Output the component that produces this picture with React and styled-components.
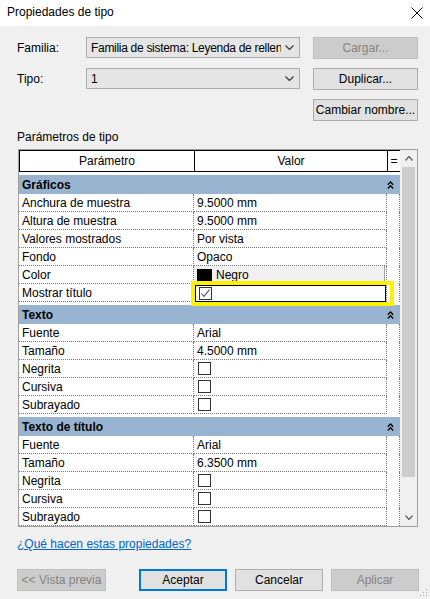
import styled, { createGlobalStyle } from "styled-components";

const GlobalStyle = createGlobalStyle`
  html, body {
    margin: 0;
    padding: 0;
    background: #f0f0f0;
  }
  * {
    box-sizing: border-box;
  }
`;

const sections = [
  {
    title: "Gráficos",
    rows: [
      { name: "Anchura de muestra", value: "9.5000 mm" },
      { name: "Altura de muestra", value: "9.5000 mm" },
      { name: "Valores mostrados", value: "Por vista" },
      { name: "Fondo", value: "Opaco" },
      { name: "Color", kind: "color", value: "Negro" },
      { name: "Mostrar título", kind: "check", checked: true, highlight: true },
    ],
  },
  {
    title: "Texto",
    rows: [
      { name: "Fuente", value: "Arial" },
      { name: "Tamaño", value: "4.5000 mm" },
      { name: "Negrita", kind: "check" },
      { name: "Cursiva", kind: "check" },
      { name: "Subrayado", kind: "check" },
    ],
  },
  {
    title: "Texto de título",
    rows: [
      { name: "Fuente", value: "Arial" },
      { name: "Tamaño", value: "6.3500 mm" },
      { name: "Negrita", kind: "check" },
      { name: "Cursiva", kind: "check" },
      { name: "Subrayado", kind: "check" },
    ],
  },
];

const Window = styled.div`
  width: 430px;
  height: 599px;
  background: #f0f0f0;
  font-family: "Liberation Sans", Arial, sans-serif;
  font-size: 12px;
  color: #000;
  display: flex;
  flex-direction: column;
  overflow: hidden;
  position: relative;
`;

const TitleBar = styled.div`
  height: 26px;
  background: #fff;
  display: flex;
  align-items: center;
  justify-content: space-between;
  padding: 0 7px 2px 7px;
  font-size: 12px;
`;

const CloseBtn = styled.div`
  width: 12px;
  height: 12px;
  display: flex;
  margin-top: 2px;
`;

const Body = styled.div`
  flex: 1;
  padding: 11px 12px 0 17px;
  display: flex;
  flex-direction: column;
`;

const FormGrid = styled.div`
  display: grid;
  grid-template-columns: 56px 214px 105px;
  column-gap: 13px;
  grid-template-rows: 22px 22px 22px;
  row-gap: 9px;
  & > :nth-child(-n + 3) {
    margin-bottom: 1px;
  }
`;

const Label = styled.div`
  display: flex;
  align-items: center;
  white-space: nowrap;
`;

const Combo = styled.div`
  height: 21px;
  border: 1px solid #adadad;
  background: #e5e5e5;
  display: flex;
  align-items: center;
  padding: 0 5px 0 4px;
  gap: 4px;
`;

const ComboText = styled.span`
  flex: 1;
  overflow: hidden;
  white-space: nowrap;
  letter-spacing: -0.3px;
`;

const Button = styled.div`
  height: 22px;
  width: ${(p) => (p.$w ? `${p.$w}px` : "auto")};
  flex: none;
  display: flex;
  align-items: center;
  justify-content: center;
  background: ${(p) => (p.$disabled ? "#cccccc" : "#e1e1e1")};
  border: 1px solid
    ${(p) => (p.$disabled ? "#bfbfbf" : p.$default ? "#0078d7" : "#adadad")};
  box-shadow: ${(p) => (p.$default ? "inset 0 0 0 1px #0078d7" : "none")};
  color: ${(p) => (p.$disabled ? "#838383" : "#000")};
  white-space: nowrap;
`;

const SectionLabel = styled.div`
  margin-top: 9px;
  line-height: 15px;
  height: 15px;
`;

const Frame = styled.div`
  margin-top: 4px;
  width: 400px;
  margin-left: 1px;
  border: 1px solid #a0a0a0;
  background: #fff;
  display: flex;
`;

const Grid = styled.div`
  width: 381px;
  display: flex;
  flex-direction: column;
`;

const HeaderRow = styled.div`
  display: grid;
  grid-template-columns: 175px 193px 13px;
  height: 22px;
  border-top: 1px solid #000;
  border-bottom: 1px solid #000;
  border-left: 1px solid #000;
`;

const HeaderCell = styled.div`
  display: flex;
  align-items: center;
  justify-content: center;
  border-right: 1px solid #000;
`;

const Category = styled.div`
  margin-top: 3px;
  height: 19px;
  background: #99b4d1;
  display: grid;
  grid-template-columns: 368px 13px;
  font-weight: bold;
  align-items: center;
`;

const CategoryTitle = styled.div`
  padding-left: 3px;
`;

const CategoryToggle = styled.div`
  display: flex;
  justify-content: flex-start;
`;

const Row = styled.div`
  display: grid;
  grid-template-columns: 175px 193px 13px;
  height: 18px;
`;

const Cell = styled.div`
  position: relative;
  border-right: 1px dotted #7a7a7a;
  border-bottom: ${(p) => (p.$noBottom ? "none" : "1px dotted #7a7a7a")};
  padding-left: ${(p) => (p.$flush ? 0 : 3)}px;
  display: flex;
  align-items: center;
  white-space: nowrap;
  overflow: ${(p) => (p.$overlay ? "visible" : "hidden")};
`;

const Swatch = styled.span`
  width: 15px;
  height: 12px;
  background: #000;
  margin: 0 4px 0 3px;
`;

const ColorBox = styled.div`
  flex: 1;
  height: 17px;
  display: flex;
  align-items: center;
  background: #f0f0f0;
  border-right: 1px solid #a0a0a0;
  margin-right: 1px;
`;

const EditBox = styled.div`
  position: absolute;
  left: 1px;
  top: 1px;
  right: 0;
  bottom: -1px;
  border: 1px solid #000;
  background: #fff;
  display: flex;
  align-items: center;
  padding-left: 2px;
`;

const Highlight = styled.div`
  position: absolute;
  left: -3px;
  top: -3px;
  right: -8px;
  bottom: -5px;
  border: 4px solid #fff200;
  pointer-events: none;
`;

const Box = styled.span`
  width: 13px;
  height: 13px;
  border: 1px solid #333;
  background: #fff;
  display: flex;
  align-items: center;
  justify-content: center;
  margin-left: 1px;
`;

const Scrollbar = styled.div`
  width: 17px;
  background: #f0f0f0;
  display: flex;
  flex-direction: column;
  align-items: center;
`;

const ArrowBtn = styled.div`
  height: 17px;
  width: 17px;
  display: flex;
  align-items: center;
  justify-content: center;
`;

const Thumb = styled.div`
  width: 13px;
  height: 310px;
  background: #cdcdcd;
`;

const Track = styled.div`
  flex: 1;
`;

const HelpLink = styled.a`
  margin-top: 10px;
  line-height: 15px;
  color: #0066cc;
  text-decoration: underline;
  align-self: flex-start;
  cursor: pointer;
`;

const ButtonBar = styled.div`
  margin-top: 17px;
  display: flex;
  gap: 8px;
  & > :first-child {
    margin-right: 25px;
  }
`;

const Grip = styled.svg`
  position: absolute;
  right: 2px;
  bottom: 2px;
`;

function Chevron({ dir = "down", color = "#404040", w = 9, h = 5 }) {
  const d =
    dir === "down"
      ? `M0.5 0.5 L${w / 2} ${h - 0.5} L${w - 0.5} 0.5`
      : `M0.5 ${h - 0.5} L${w / 2} 0.5 L${w - 0.5} ${h - 0.5}`;
  return (
    <svg width={w} height={h} viewBox={`0 0 ${w} ${h}`}>
      <path d={d} fill="none" stroke={color} strokeWidth="1.3" />
    </svg>
  );
}

function DoubleUp() {
  return (
    <svg width="7" height="8" viewBox="0 0 7 8">
      <path
        d="M0.8 3.8 L3.5 1 L6.2 3.8 M0.8 7.5 L3.5 4.7 L6.2 7.5"
        fill="none"
        stroke="#000"
        strokeWidth="1.3"
      />
    </svg>
  );
}

function Checkbox({ checked }) {
  return (
    <Box>
      {checked && (
        <svg width="11" height="11" viewBox="0 0 11 11">
          <path d="M1.5 5.5 L4 8.5 L9.5 1.5" fill="none" stroke="#404040" strokeWidth="1.1" />
        </svg>
      )}
    </Box>
  );
}

function ValueCell({ row }) {
  if (row.kind === "color") {
    return (
      <Cell $flush>
        <ColorBox>
          <Swatch />
          {row.value}
        </ColorBox>
      </Cell>
    );
  }
  if (row.kind === "check" && row.highlight) {
    return (
      <Cell $overlay>
        <EditBox>
          <Checkbox checked={row.checked} />
        </EditBox>
        <Highlight />
      </Cell>
    );
  }
  if (row.kind === "check") {
    return (
      <Cell>
        <Checkbox checked={row.checked} />
      </Cell>
    );
  }
  return <Cell>{row.value}</Cell>;
}

export default function App() {
  return (
    <Window>
      <GlobalStyle />
      <TitleBar>
        <span>Propiedades de tipo</span>
        <CloseBtn>
          <svg width="12" height="12" viewBox="0 0 12 12">
            <path d="M0.5 0.5 L11.5 11.5 M11.5 0.5 L0.5 11.5" stroke="#000" strokeWidth="1" />
          </svg>
        </CloseBtn>
      </TitleBar>
      <Body>
        <FormGrid>
          <Label>Familia:</Label>
          <Combo>
            <ComboText>Familia de sistema: Leyenda de relleno de</ComboText>
            <Chevron />
          </Combo>
          <Button $disabled>Cargar...</Button>
          <Label>Tipo:</Label>
          <Combo>
            <ComboText>1</ComboText>
            <Chevron />
          </Combo>
          <Button>Duplicar...</Button>
          <span />
          <span />
          <Button>Cambiar nombre...</Button>
        </FormGrid>
        <SectionLabel>Parámetros de tipo</SectionLabel>
        <Frame>
          <Grid>
            <HeaderRow>
              <HeaderCell>Parámetro</HeaderCell>
              <HeaderCell>Valor</HeaderCell>
              <HeaderCell>=</HeaderCell>
            </HeaderRow>
            {sections.map((s) => (
              <div key={s.title}>
                <Category>
                  <CategoryTitle>{s.title}</CategoryTitle>
                  <CategoryToggle>
                    <DoubleUp />
                  </CategoryToggle>
                </Category>
                {s.rows.map((r, i) => (
                  <Row key={s.title + i}>
                    <Cell>{r.name}</Cell>
                    <ValueCell row={r} />
                    <Cell $noBottom />
                  </Row>
                ))}
              </div>
            ))}
          </Grid>
          <Scrollbar>
            <ArrowBtn>
              <Chevron dir="up" color="#606060" w={8} h={5} />
            </ArrowBtn>
            <Thumb />
            <Track />
            <ArrowBtn>
              <Chevron dir="down" color="#606060" w={8} h={5} />
            </ArrowBtn>
          </Scrollbar>
        </Frame>
        <HelpLink>¿Qué hacen estas propiedades?</HelpLink>
        <ButtonBar>
          <Button $disabled $w={89}>
            &lt;&lt; Vista previa
          </Button>
          <Button $default $w={88}>
            Aceptar
          </Button>
          <Button $w={88}>Cancelar</Button>
          <Button $disabled $w={88}>
            Aplicar
          </Button>
        </ButtonBar>
      </Body>
      <Grip width="8" height="8" viewBox="0 0 8 8">
        <rect x="6" y="0" width="1" height="1" fill="#b0b0b0" />
        <rect x="3" y="3" width="1" height="1" fill="#b0b0b0" />
        <rect x="6" y="3" width="1" height="1" fill="#b0b0b0" />
        <rect x="0" y="6" width="1" height="1" fill="#b0b0b0" />
        <rect x="3" y="6" width="1" height="1" fill="#b0b0b0" />
        <rect x="6" y="6" width="1" height="1" fill="#b0b0b0" />
      </Grip>
    </Window>
  );
}
